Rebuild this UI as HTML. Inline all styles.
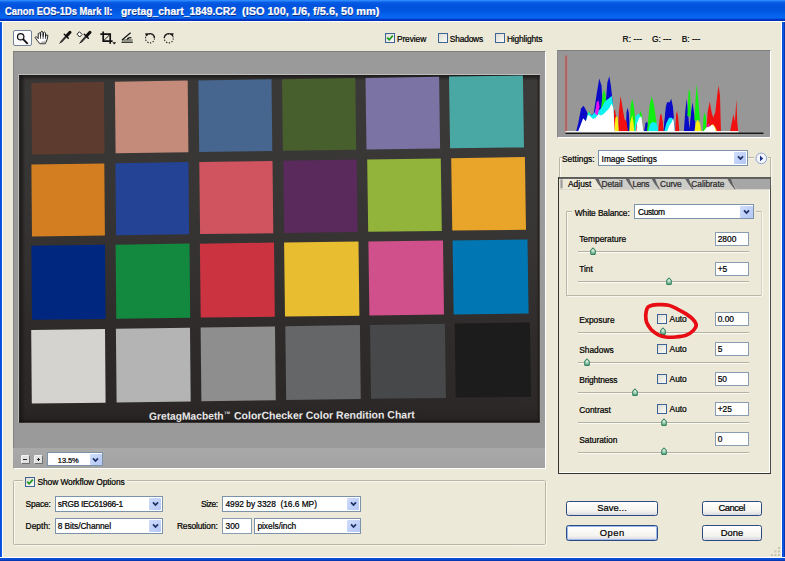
<!DOCTYPE html><html><head><meta charset="utf-8"><title>Camera Raw</title><style>
html,body{margin:0;padding:0;overflow:hidden;}
body{width:785px;height:561px;overflow:hidden;background:#ece9d8;font-family:"Liberation Sans",sans-serif;font-size:8.4px;color:#000;position:relative;}
.a{position:absolute;}
.t{position:absolute;white-space:nowrap;line-height:10px;height:10px;-webkit-text-stroke:0.22px currentColor;}
#title{left:0;top:0;width:785px;height:21px;background:linear-gradient(to bottom,#2e8cff 0%,#2a86fb 4%,#0a5ee6 10%,#0254de 22%,#0053dc 35%,#0258e2 55%,#0565f0 75%,#0566f2 86%,#0348d2 90%,#0030bc 94%,#0030b8 100%);border-bottom:1px solid #fff}
#title .t{left:4px;top:6.3px;color:#fff;font-weight:bold;font-size:10.2px;line-height:12px;height:12px;text-shadow:0.6px 0.6px 0.5px #0a2a80;}
.bl{background:#0a4fd6;}
.inp{position:absolute;background:#fff;border:1px solid #8a9cb2;box-sizing:border-box;}
.inp .t{left:1.4px;top:1.7px;}
.cmb{position:absolute;background:#fff;border:1px solid #7b92ab;box-sizing:border-box;}
.cmb .t{left:3px;top:2.2px;}
.cmb .dd{position:absolute;right:0.3px;top:0.5px;bottom:0.5px;width:12.2px;background:linear-gradient(135deg,#cfdcfb,#b3c7f6);border-radius:0.8px;box-sizing:border-box;}
.cmb .dd svg{position:absolute;left:2.6px;top:50%;margin-top:-2.8px;}
.cb{position:absolute;width:10px;height:10px;box-sizing:border-box;border:1px solid #3d6496;background:linear-gradient(135deg,#dedcd2,#fbfbf8);}
.btn{position:absolute;box-sizing:border-box;border:1px solid #2b4a80;border-radius:2.5px;background:linear-gradient(to bottom,#fff,#f4f3ee 70%,#d6d8e2);text-align:center;}
.btn .t{left:0;right:0;top:1.8px;font-size:9.4px;}
.gb{position:absolute;box-sizing:border-box;border:1px solid #b9b6a4;border-radius:1.5px;box-shadow:0.8px 0.8px 0 #fbfaf5,inset 0.8px 0.8px 0 #fbfaf5;}
.trk{position:absolute;height:1.2px;background:#b3b1a2;border-bottom:1px solid #fbfaf4;}
</style></head><body>
<svg width="0" height="0" style="position:absolute"><defs><linearGradient id="tg" x1="0" y1="0" x2="0" y2="1"><stop offset="0.2" stop-color="#f4fbf4"/><stop offset="1" stop-color="#5aa881"/></linearGradient></defs></svg>
<div id="title" class="a">
<div class="t" style="left:4.5px;transform-origin:0 0;transform:scaleX(0.9207)">Canon EOS-1Ds Mark II:</div>
<div class="t" style="left:120.5px;transform-origin:0 0;transform:scaleX(1.0150)">gretag_chart_1849.CR2</div>
<div class="t" style="left:242.3px;transform-origin:0 0;transform:scaleX(1.0731)">(ISO 100, 1/6, f/5.6, 50 mm)</div>
</div>
<div class="a bl" style="left:0;top:22px;width:1.6px;height:539px;background:linear-gradient(to right,#0838b4,#0a50e0 30%,#0f5ee8 70%,#0a52dc);border-right:0.9px solid #fff"></div>
<div class="a bl" style="left:781px;top:22px;width:3.2px;height:539px;background:linear-gradient(to right,#0a4ad0,#0b55e0 50%,#062a9a);border-left:0.9px solid #fff"></div>
<div class="a bl" style="left:0;top:557px;width:785px;height:3.2px;background:linear-gradient(to bottom,#0a4ad0,#0b50dc 40%,#0630a4);border-top:0.9px solid #fff"></div>
<div class="a" style="left:13px;top:30px;width:19px;height:16px;box-sizing:border-box;border:1px solid #74829a;border-radius:2px;background:#fcfcff"></div>
<svg class="a" style="left:0;top:22px" width="200" height="30" viewBox="0 22 200 30">
<g fill="none" stroke="#111" stroke-width="1.1">
<circle cx="20.700" cy="36.700" r="3.200" fill="#f0f0f0" stroke-width="1.250"/>
<path d="M23.100 39.200 L27.700 43.900" stroke-width="1.900"/>
</g>
<!-- hand -->
<path d="M39.800 43.700 L37.200 40.400 L35.200 37.600 L36.100 36.500 L38.200 38.600 L38.200 33.700 L39.200 32.800 L40.300 33.500 L40.500 36.300 L40.800 32 L41.800 31.300 L42.900 32 L43.100 36.300 L43.600 32.600 L44.600 32.100 L45.500 32.900 L45.500 36.800 L46.300 35 L47.300 34.900 L47.900 35.900 L47 39.800 L45.300 43.700 Z" fill="#fff" stroke="#151515" stroke-width="0.950" stroke-linejoin="round"/>
<path d="M40.500 36 V38.800 M43.100 36 V38.800 M45.500 36.600 V38.800" stroke="#222" stroke-width="0.800" fill="none"/>
<path d="M40.500 43.200 L44.800 43.200 L46 40.500 L42 41.500 Z" fill="#b8b8b8"/>
<!-- eyedropper -->
<g stroke="#111" stroke-linecap="round">
<path d="M59.8 43.2 L61.6 41.2" stroke-width="1"/>
<path d="M61.4 41.6 L65.6 37" stroke-width="2" stroke="#333"/>
<path d="M64.3 34.300 L68.300 38.300" stroke-width="1.5"/>
<path d="M66.8 35.8 L70 32.300" stroke-width="3.1"/>
</g>
<!-- color sampler -->
<g stroke="#111" stroke-linecap="round">
<path d="M79.8 43.2 L81.6 41.2" stroke-width="1"/>
<path d="M81.4 41.6 L85.6 37" stroke-width="2" stroke="#333"/>
<path d="M84.3 34.300 L88.300 38.300" stroke-width="1.5"/>
<path d="M86.8 35.8 L90 32.300" stroke-width="3.1"/>
<path d="M79.7 32 L82.1 34.500 L79.7 37 L77.3 34.500 Z" fill="#fff" stroke-width="1" stroke="#222"/>
</g>
<!-- crop -->
<g stroke="#111" stroke-width="1.7" fill="none">
<path d="M103.2 31.400 V41.200 H112.600"/>
<path d="M100.400 34.200 H110.200 V43.800"/>
<path d="M103.800 40.600 L110 34.400" stroke-width="1"/>
</g>
<path d="M112.400 42.200 H116.200 L114.300 44.600 Z" fill="#111"/>
<!-- straighten -->
<g stroke="#111" fill="none">
<path d="M121.5 42.2 H132.8" stroke-width="1.2"/>
<path d="M122 40 L130.600 32.800" stroke-width="1.2"/><path d="M122 40 H132.600" stroke-width="0.800"/>
<path d="M127.3 39.6 A2.8 2.8 0 0 1 131.4 38" stroke-width="1.4"/>
</g>
<!-- rotate ccw -->
<g stroke="#222" fill="none">
<circle cx="150" cy="38.4" r="4.5" stroke-width="1.1" stroke-dasharray="1.3 1.5"/>
<path d="M146.6 35 A4.6 4.6 0 0 1 154.5 38" stroke-width="1.3"/>
</g>
<path d="M145.2 33.2 L148.8 33.6 L146 36.6 Z" fill="#111"/>
<!-- rotate cw -->
<g stroke="#222" fill="none">
<circle cx="168.8" cy="38.4" r="4.5" stroke-width="1.1" stroke-dasharray="1.3 1.5"/>
<path d="M172.2 35 A4.6 4.6 0 0 0 164.3 38" stroke-width="1.3"/>
</g>
<path d="M173.6 33.2 L170 33.6 L172.8 36.6 Z" fill="#111"/>
</svg>
<div class="cb" style="left:385px;top:32.8px"><svg class="a" style="left:0;top:0" width="8" height="8" viewBox="0 0 8 8"><path d="M1.2 3.6 L3.2 5.8 L6.8 1.6" fill="none" stroke="#1f9a1f" stroke-width="1.7"/></svg></div>
<div class="t" style="left:396.9px;top:33.5px;;letter-spacing:-0.082px">Preview</div>
<div class="cb" style="left:438px;top:32.8px"></div>
<div class="t" style="left:449.8px;top:33.5px;;letter-spacing:-0.180px">Shadows</div>
<div class="cb" style="left:495px;top:32.8px"></div>
<div class="t" style="left:506.9px;top:33.5px;;letter-spacing:-0.139px">Highlights</div>
<div class="t" style="left:622.6px;top:33.6px;;letter-spacing:0.079px">R: ---</div>
<div class="t" style="left:652px;top:33.6px;;letter-spacing:-0.049px">G: ---</div>
<div class="t" style="left:681.8px;top:33.6px;;letter-spacing:-0.011px">B: ---</div>
<div class="a" style="left:12.9px;top:50.5px;width:533.1px;height:418.7px;box-sizing:border-box;border:1px solid #fff;border-top-color:#7e7e7e;border-left-color:#858585;background:#999a99"></div>
<div class="a" style="left:13px;top:448px;width:532px;height:20px;background:linear-gradient(to bottom,#a9a9a9,#a2a2a2)"></div>
<svg class="a" style="left:18px;top:74px" width="522.4" height="349" viewBox="18 74 522.4 349"><defs><linearGradient id="cg" x1="0" y1="0" x2="1" y2="0"><stop offset="0" stop-color="#1c1a19"/><stop offset="0.005" stop-color="#242221"/><stop offset="0.012" stop-color="#393736"/><stop offset="0.994" stop-color="#3c3a39"/><stop offset="1" stop-color="#1c1815"/></linearGradient><linearGradient id="cv" x1="0" y1="0" x2="0" y2="1"><stop offset="0" stop-color="#181513" stop-opacity="0.9"/><stop offset="0.008" stop-color="#1c1a19" stop-opacity="0.5"/><stop offset="0.016" stop-color="#1c1817" stop-opacity="0"/><stop offset="0.3" stop-color="#1c1817" stop-opacity="0.05"/><stop offset="0.55" stop-color="#1c1817" stop-opacity="0.2"/><stop offset="0.75" stop-color="#1c1817" stop-opacity="0.42"/><stop offset="0.95" stop-color="#1c1817" stop-opacity="0.5"/><stop offset="0.99" stop-color="#1a1615" stop-opacity="0.62"/><stop offset="1" stop-color="#120e0d" stop-opacity="0.95"/></linearGradient></defs><rect x="18.2" y="74.1" width="521.6" height="348.6" fill="#c2c2c2"/><rect x="19.1" y="75" width="520.6" height="347.6" fill="url(#cg)"/><rect x="19.1" y="75" width="520.6" height="347.6" fill="url(#cv)"/><polygon points="31.4,83.0 103.9,81.9 104.5,153.5 32.0,154.4" fill="#5d3c2f"/><polygon points="114.9,81.7 187.7,80.6 188.4,152.3 115.6,153.2" fill="#c48b7a"/><polygon points="198.4,80.4 271.5,79.3 272.3,151.1 199.2,152.0" fill="#46668f"/><polygon points="282.0,79.2 355.3,78.1 356.2,149.8 282.9,150.7" fill="#475e2d"/><polygon points="365.5,77.9 439.1,76.8 440.1,148.6 366.5,149.5" fill="#7b73a3"/><polygon points="449.0,76.6 522.9,75.5 524.0,147.4 450.1,148.3" fill="#4aa8a4"/><polygon points="31.4,164.5 104.3,163.4 104.9,235.5 32.0,236.4" fill="#d37f21"/><polygon points="115.4,163.2 188.4,162.1 189.1,234.3 116.1,235.2" fill="#254394"/><polygon points="199.3,162.0 272.5,160.9 273.3,233.2 200.1,234.1" fill="#d0545f"/><polygon points="283.3,160.7 356.7,159.6 357.6,232.0 284.2,232.9" fill="#5a2a5c"/><polygon points="367.2,159.5 440.8,158.4 441.8,230.9 368.2,231.8" fill="#93b43b"/><polygon points="451.2,158.2 524.9,157.1 526.0,229.7 452.3,230.6" fill="#e9a529"/><polygon points="31.4,245.8 105.0,244.7 105.6,318.9 32.0,319.8" fill="#00277f"/><polygon points="115.6,244.7 189.5,243.6 190.2,317.8 116.3,318.7" fill="#12893f"/><polygon points="199.9,243.7 274.0,242.6 274.8,316.7 200.7,317.6" fill="#cc3341"/><polygon points="284.1,242.6 358.5,241.5 359.4,315.7 285.0,316.6" fill="#e9bd30"/><polygon points="368.4,241.6 443.0,240.5 444.0,314.6 369.4,315.5" fill="#d0508b"/><polygon points="452.6,240.5 527.5,239.4 528.6,313.5 453.7,314.4" fill="#0077b3"/><polygon points="31.2,330.1 105.0,329.0 105.6,402.7 31.8,403.6" fill="#d4d3cf"/><polygon points="115.9,328.8 190.0,327.7 190.7,401.5 116.6,402.4" fill="#b4b4b4"/><polygon points="200.6,327.5 275.0,326.4 275.8,400.3 201.4,401.2" fill="#8e8e8e"/><polygon points="285.3,326.2 359.9,325.1 360.8,399.1 286.2,400.0" fill="#656667"/><polygon points="370.0,324.9 444.9,323.8 445.9,397.9 371.0,398.8" fill="#46484a"/><polygon points="454.7,323.6 529.9,322.5 531.0,396.7 455.8,397.6" fill="#1c1c1c"/><g transform="rotate(-0.34 149 420)" font-family="Liberation Sans,sans-serif" font-weight="bold" fill="#e6e6e6"><text x="149" y="419.9" font-size="10.6" textLength="74.6" lengthAdjust="spacingAndGlyphs">GretagMacbeth</text><text x="224.4" y="414.6" font-size="3.8">TM</text><text x="234" y="419.9" font-size="10.6" textLength="180.8" lengthAdjust="spacingAndGlyphs">ColorChecker Color Rendition Chart</text></g></svg>
<div class="a" style="left:20.6px;top:455.2px;width:9px;height:8.4px;box-sizing:border-box;border:1px solid #f4f4f4;border-right-color:#6e6e6e;border-bottom-color:#6e6e6e;border-radius:1.5px;background:#e2e2e2"><div class="a" style="left:1.5px;top:2.4px;width:4px;height:1.6px;background:#222"></div></div>
<div class="a" style="left:34px;top:455.2px;width:9px;height:8.4px;box-sizing:border-box;border:1px solid #f4f4f4;border-right-color:#6e6e6e;border-bottom-color:#6e6e6e;border-radius:1.5px;background:#e2e2e2"><div class="a" style="left:1.8px;top:2.5px;width:3.6px;height:1.4px;background:#222"></div><div class="a" style="left:2.9px;top:1.4px;width:1.4px;height:3.6px;background:#222"></div></div>
<div class="cmb" style="left:46.5px;top:452.4px;width:56.5px;height:13.9px"><div class="t" style="left:10.3px;letter-spacing:-0.093px;font-size:7.5px">13.5%</div><div class="dd"><svg width="7" height="6" viewBox="0 0 7 6"><path d="M1 1.3 L3.5 4 L6 1.3" fill="none" stroke="#1e2f66" stroke-width="1.7"/></svg></div></div>
<div class="gb" style="left:13px;top:480.3px;width:533px;height:65.2px"></div>
<div class="a" style="left:23px;top:476px;width:104px;height:12px;background:#ece9d8"></div>
<div class="cb" style="left:25.4px;top:477.2px"><svg class="a" style="left:0;top:0" width="8" height="8" viewBox="0 0 8 8"><path d="M1.2 3.6 L3.2 5.8 L6.8 1.6" fill="none" stroke="#1f9a1f" stroke-width="1.7"/></svg></div>
<div class="t" style="left:37.5px;top:477.4px;;letter-spacing:-0.077px">Show Workflow Options</div>
<div class="t" style="left:25.6px;top:499.3px;;letter-spacing:-0.175px">Space:</div>
<div class="cmb" style="left:55px;top:496px;width:107.6px;height:15.8px"><div class="t" style="left:1.8px;letter-spacing:-0.291px">sRGB IEC61966-1</div><div class="dd"><svg width="7" height="6" viewBox="0 0 7 6"><path d="M1 1.3 L3.5 4 L6 1.3" fill="none" stroke="#1e2f66" stroke-width="1.7"/></svg></div></div>
<div class="t" style="left:25.6px;top:521.2px;;letter-spacing:0.025px">Depth:</div>
<div class="cmb" style="left:55px;top:518.2px;width:107.6px;height:15.6px"><div class="t" style="left:1.8px;letter-spacing:-0.095px">8 Bits/Channel</div><div class="dd"><svg width="7" height="6" viewBox="0 0 7 6"><path d="M1 1.3 L3.5 4 L6 1.3" fill="none" stroke="#1e2f66" stroke-width="1.7"/></svg></div></div>
<div class="t" style="left:201.1px;top:499.3px;;letter-spacing:-0.395px">Size:</div>
<div class="cmb" style="left:221.6px;top:496px;width:139.2px;height:15.8px"><div class="t" style="left:2.9px;letter-spacing:-0.033px">4992 by 3328&nbsp; (16.6 MP)</div><div class="dd"><svg width="7" height="6" viewBox="0 0 7 6"><path d="M1 1.3 L3.5 4 L6 1.3" fill="none" stroke="#1e2f66" stroke-width="1.7"/></svg></div></div>
<div class="t" style="left:176.9px;top:521.2px;;letter-spacing:-0.102px">Resolution:</div>
<div class="inp" style="left:221.6px;top:518.2px;width:30.8px;height:15.6px"><div class="t" style="left:2.9px;top:2.2px">300</div></div>
<div class="cmb" style="left:254px;top:518.2px;width:106.8px;height:15.6px"><div class="t" style="left:2.4px;letter-spacing:-0.029px">pixels/inch</div><div class="dd"><svg width="7" height="6" viewBox="0 0 7 6"><path d="M1 1.3 L3.5 4 L6 1.3" fill="none" stroke="#1e2f66" stroke-width="1.7"/></svg></div></div>
<div class="a" style="left:557px;top:50px;width:214px;height:88px;box-sizing:border-box;background:#969796;border:1px solid #fff;border-top-color:#7e7e7e;border-left-color:#8a8a8a"></div>
<svg class="a" style="left:558px;top:51px" width="212" height="86" viewBox="558 51 212 86"><rect x="564.4" y="55.6" width="3.4" height="76" fill="#b98686"/><rect x="565.2" y="55.6" width="1.8" height="76" fill="#a96565"/><g transform="translate(560,70) scale(0.140135)"><polygon points="115,440 130,380 150,275 168,255 188,290 205,330 240,310 262,170 280,60 296,110 305,250 325,250 338,90 352,45 363,110 375,220 385,440" fill="#0a0ac8"/><polygon points="470,440 475,300 482,270 490,300 500,440" fill="#0a0ac8"/><polygon points="600,440 610,380 622,370 632,400 640,440" fill="#0a0ac8"/><polygon points="740,440 750,330 765,230 785,230 785,440" fill="#0a0ac8"/><polygon points="290,300 305,170 315,140 325,180 335,300" fill="#10f010"/><polygon points="190,340 205,290 225,330" fill="#10f010"/><polygon points="495,440 505,250 515,205 525,250 535,330 540,440" fill="#10f010"/><polygon points="560,340 575,290 590,340" fill="#10f010"/><polygon points="620,440 640,250 655,185 670,250 690,380 700,440" fill="#10f010"/><polygon points="185,440 190,340 205,300 225,325 250,300 262,250 275,290 300,265 320,225 345,205 370,185 380,260 385,440" fill="#10f0f0"/><polygon points="250,310 262,230 275,215 282,260 268,325" fill="#f010f0"/><polygon points="630,440 640,390 660,370 690,380 705,440" fill="#10f0f0"/><polygon points="530,440 540,330 560,310 580,340 590,440" fill="#10f0f0"/><polygon points="745,440 760,380 785,330 785,440" fill="#10f0f0"/><polygon points="385,290 392,280 400,330 415,440 385,440" fill="#f01010"/><polygon points="415,440 420,300 432,185 445,260 460,350 475,370 485,440" fill="#f01010"/><polygon points="540,440 548,380 555,400 560,440" fill="#f01010"/><polygon points="700,440 712,340 722,315 732,360 740,440" fill="#f01010"/><polygon points="388,440 395,340 410,330 420,440" fill="#f8f010"/><polygon points="495,440 500,380 515,320 525,380 530,440" fill="#f8f010"/><polygon points="128,440 150,385 165,345 185,365 200,320 215,330 235,350 255,340 275,315 290,325 310,315 330,295 350,275 368,240 380,270 385,345 390,440" fill="#fff"/><polygon points="545,440 550,380 565,340 580,330 590,400 595,440" fill="#fff"/></g><g transform="translate(660,70) scale(0.140135)"><polygon points="0,440 0,320 8,315 18,380 25,440" fill="#f01010"/><polygon points="25,440 35,330 45,230 55,300 65,240 80,205 92,260 100,350 105,440" fill="#0a0ac8"/><polygon points="30,440 45,380 65,340 85,340 100,370 105,440" fill="#10f0f0"/><polygon points="50,440 65,400 85,370 95,340 100,380 105,440" fill="#fff"/><polygon points="108,440 115,320 122,290 130,340 138,440" fill="#f01010"/><polygon points="170,440 180,300 190,205 200,300 210,420 222,300 232,230 242,300 250,360 255,440" fill="#0a0ac8"/><polygon points="195,330 205,135 215,160 220,330" fill="#10f010"/><polygon points="245,360 255,200 262,100 272,200 285,360" fill="#10f010"/><polygon points="245,440 255,380 268,355 285,380 295,440" fill="#f8f010"/><polygon points="305,440 310,340 320,300 328,340 332,440" fill="#10f010"/><polygon points="330,440 340,300 355,225 368,300 380,340 395,300 408,180 418,110 428,180 435,440" fill="#f01010"/><polygon points="335,410 345,380 355,400" fill="#f010f0"/><polygon points="355,440 365,400 378,385 395,410 408,440" fill="#f8f010"/><polygon points="310,440 330,410 350,405 370,390 385,400 400,440" fill="#fff"/><polygon points="500,440 515,360 525,315 535,370 545,210 552,380 558,440" fill="#f01010"/></g><rect x="565.5" y="131.1" width="173" height="1.5" fill="#fff"/><rect x="565.5" y="132.6" width="198" height="1.3" fill="#080808"/></svg>
<div class="gb" style="left:558.5px;top:157.3px;width:212.5px;height:28px;border-bottom:none"></div>
<div class="a" style="left:561.5px;top:150px;width:36px;height:16px;background:#ece9d8"></div><div class="a" style="left:753.6px;top:150px;width:14.6px;height:16px;background:#ece9d8"></div>
<div class="t" style="left:562px;top:154px;">Settings:</div>
<div class="cmb" style="left:598.3px;top:150.4px;width:149.4px;height:15.6px"><div class="t" style="left:2.3px;letter-spacing:-0.045px">Image Settings</div><div class="dd"><svg width="7" height="6" viewBox="0 0 7 6"><path d="M1 1.3 L3.5 4 L6 1.3" fill="none" stroke="#1e2f66" stroke-width="1.7"/></svg></div></div>
<svg class="a" style="left:754px;top:151px" width="15" height="15" viewBox="0 0 15 15"><circle cx="7.3" cy="7.4" r="5.3" fill="#f4f6fd" stroke="#8fa3cf" stroke-width="1"/><path d="M6 4.6 L9.2 7.4 L6 10.2 Z" fill="#1a2f8a"/></svg>
<div class="a" style="left:558.3px;top:176.6px;width:212.7px;height:297.7px;box-sizing:border-box;border:1.1px solid #34342f;border-right:1.9px solid #4a4a46;background:#ece9d8;box-shadow:inset -1px -1px 0 #fff"></div>
<svg class="a" style="left:559px;top:177px" width="212" height="13" viewBox="559 177 212 13"><rect x="559" y="177" width="211.2" height="12.3" fill="#a6a6a6"/><path d="M597 189.3 L597 179 H729 L737 189.3 Z" fill="#cdccc7"/><path d="M559 189.3 V179 H595.5 L601.5 189.3 Z" fill="#ece9d8"/><rect x="559" y="177" width="211.2" height="1.9" fill="#5c5c5a"/><rect x="560.4" y="179.4" width="2.2" height="9" fill="#9c9c9a"/><path d="M595 178.8 H598.6 Q600 184 603.4 189.3 H602.4 Q598.2 185 595 178.8 Z" fill="#626264"/><path d="M625.6 178.8 H629.2 Q630.6 184 634 189.3 H633 Q628.8 185 625.6 178.8 Z" fill="#626264"/><path d="M651.6 178.8 H655.2 Q656.6 184 660 189.3 H659 Q654.8 185 651.6 178.8 Z" fill="#626264"/><path d="M685.2 178.8 H688.8 Q690.2 184 693.6 189.3 H692.6 Q688.4 185 685.2 178.8 Z" fill="#626264"/><path d="M727.3 178.8 H730.9 Q732.3 184 735.7 189.3 H734.7 Q730.5 185 727.3 178.8 Z" fill="#626264"/></svg>
<div class="t" style="left:568px;top:179px;;letter-spacing:0.009px">Adjust</div>
<div class="t" style="left:601.6px;top:179px;color:#2a2a2a;letter-spacing:-0.096px">Detail</div>
<div class="t" style="left:632.5px;top:179px;color:#2a2a2a;letter-spacing:-0.379px">Lens</div>
<div class="t" style="left:660px;top:179px;color:#2a2a2a;letter-spacing:-0.162px">Curve</div>
<div class="t" style="left:691.3px;top:179px;color:#2a2a2a;letter-spacing:-0.058px">Calibrate</div>
<div class="gb" style="left:565.6px;top:211.3px;width:196.6px;height:84.8px;border-right-color:#d6d3c2"></div>
<div class="a" style="left:572px;top:204px;width:184px;height:16px;background:#ece9d8"></div>
<div class="t" style="left:574.8px;top:207.5px;;letter-spacing:-0.107px">White Balance:</div>
<div class="cmb" style="left:633.8px;top:204.2px;width:120px;height:15.3px"><div class="t" style="left:3.2px;letter-spacing:-0.390px">Custom</div><div class="dd"><svg width="7" height="6" viewBox="0 0 7 6"><path d="M1 1.3 L3.5 4 L6 1.3" fill="none" stroke="#1e2f66" stroke-width="1.7"/></svg></div></div>
<div class="t" style="left:579.2px;top:234.4px;">Temperature</div>
<div class="inp" style="left:715.3px;top:231.6px;width:33.8px;height:14.4px"><div class="t" style="left:1.4px;top:1.2px">2800</div></div>
<div class="trk" style="left:578px;top:251.3px;width:171px"></div>
<svg class="a" style="left:589px;top:247.1px" width="8" height="9" viewBox="0 0 8 9"><path d="M4 1 L6.300 3.500 V6.400 Q6.300 7.400 5.300 7.400 H2.700 Q1.700 7.400 1.700 6.400 V3.500 Z" fill="url(#tg)" stroke="#35845f" stroke-width="1.1"/></svg>
<div class="t" style="left:579.2px;top:264.4px;">Tint</div>
<div class="inp" style="left:715.3px;top:261.6px;width:33.8px;height:14.4px"><div class="t" style="left:1.4px;top:1.2px">+5</div></div>
<div class="trk" style="left:578px;top:281.3px;width:171px"></div>
<svg class="a" style="left:665px;top:277.1px" width="8" height="9" viewBox="0 0 8 9"><path d="M4 1 L6.300 3.500 V6.400 Q6.300 7.400 5.300 7.400 H2.700 Q1.700 7.400 1.700 6.400 V3.500 Z" fill="url(#tg)" stroke="#35845f" stroke-width="1.1"/></svg>
<div class="t" style="left:579.2px;top:314.6px;">Exposure</div>
<div class="inp" style="left:715.3px;top:311.8px;width:33.8px;height:14.4px"><div class="t" style="left:1.4px;top:1.2px">0.00</div></div>
<div class="trk" style="left:578px;top:331.5px;width:171px"></div>
<svg class="a" style="left:658.9px;top:327.3px" width="8" height="9" viewBox="0 0 8 9"><path d="M4 1 L6.300 3.500 V6.400 Q6.300 7.400 5.300 7.400 H2.700 Q1.700 7.400 1.700 6.400 V3.500 Z" fill="url(#tg)" stroke="#35845f" stroke-width="1.1"/></svg>
<div class="cb" style="left:656.9px;top:313.8px"></div>
<div class="t" style="left:669.6px;top:314.1px;;letter-spacing:-0.045px">Auto</div>
<div class="t" style="left:579.2px;top:344.8px;">Shadows</div>
<div class="inp" style="left:715.3px;top:342px;width:33.8px;height:14.4px"><div class="t" style="left:1.4px;top:1.2px">5</div></div>
<div class="trk" style="left:578px;top:361.7px;width:171px"></div>
<svg class="a" style="left:583.2px;top:357.5px" width="8" height="9" viewBox="0 0 8 9"><path d="M4 1 L6.300 3.500 V6.400 Q6.300 7.400 5.300 7.400 H2.700 Q1.700 7.400 1.700 6.400 V3.500 Z" fill="url(#tg)" stroke="#35845f" stroke-width="1.1"/></svg>
<div class="cb" style="left:656.9px;top:344px"></div>
<div class="t" style="left:669.6px;top:344.3px;;letter-spacing:-0.045px">Auto</div>
<div class="t" style="left:579.2px;top:374.8px;;letter-spacing:-0.139px">Brightness</div>
<div class="inp" style="left:715.3px;top:372px;width:33.8px;height:14.4px"><div class="t" style="left:1.4px;top:1.2px">50</div></div>
<div class="trk" style="left:578px;top:391.7px;width:171px"></div>
<svg class="a" style="left:631.4px;top:387.5px" width="8" height="9" viewBox="0 0 8 9"><path d="M4 1 L6.300 3.500 V6.400 Q6.300 7.400 5.300 7.400 H2.700 Q1.700 7.400 1.700 6.400 V3.500 Z" fill="url(#tg)" stroke="#35845f" stroke-width="1.1"/></svg>
<div class="cb" style="left:656.9px;top:374px"></div>
<div class="t" style="left:669.6px;top:374.3px;;letter-spacing:-0.045px">Auto</div>
<div class="t" style="left:579.2px;top:404.8px;">Contrast</div>
<div class="inp" style="left:715.3px;top:402px;width:33.8px;height:14.4px"><div class="t" style="left:1.4px;top:1.2px">+25</div></div>
<div class="trk" style="left:578px;top:421.7px;width:171px"></div>
<svg class="a" style="left:659.7px;top:417.5px" width="8" height="9" viewBox="0 0 8 9"><path d="M4 1 L6.300 3.500 V6.400 Q6.300 7.400 5.300 7.400 H2.700 Q1.700 7.400 1.700 6.400 V3.500 Z" fill="url(#tg)" stroke="#35845f" stroke-width="1.1"/></svg>
<div class="cb" style="left:656.9px;top:404px"></div>
<div class="t" style="left:669.6px;top:404.3px;;letter-spacing:-0.045px">Auto</div>
<div class="t" style="left:579.2px;top:434.7px;">Saturation</div>
<div class="inp" style="left:715.3px;top:431.9px;width:33.8px;height:14.4px"><div class="t" style="left:1.4px;top:1.2px">0</div></div>
<div class="trk" style="left:578px;top:451.6px;width:171px"></div>
<svg class="a" style="left:659.7px;top:447.4px" width="8" height="9" viewBox="0 0 8 9"><path d="M4 1 L6.300 3.500 V6.400 Q6.300 7.400 5.300 7.400 H2.700 Q1.700 7.400 1.700 6.400 V3.500 Z" fill="url(#tg)" stroke="#35845f" stroke-width="1.1"/></svg>
<svg class="a" style="left:638px;top:298px" width="66" height="46" viewBox="638 298 66 46"><path d="M649.3 306.2 C651.0 305.5 654.2 304.9 657.4 304.7 C660.7 304.5 665.2 304.4 668.6 305.2 C672.0 306.0 674.9 307.8 677.8 309.3 C680.7 310.7 683.4 312.2 686.0 313.9 C688.5 315.6 691.4 317.6 693.1 319.5 C694.8 321.3 696.2 323.2 696.2 325.1 C696.2 326.9 694.8 329.0 693.1 330.7 C691.4 332.4 688.9 334.2 686.0 335.3 C683.1 336.3 679.2 336.7 675.8 337.0 C672.4 337.3 668.5 337.4 665.6 337.0 C662.7 336.6 660.8 336.0 658.4 334.8 C656.1 333.5 653.3 331.7 651.3 329.7 C649.4 327.6 647.7 324.9 646.7 322.5 C645.8 320.1 645.7 317.7 645.7 315.4 C645.8 313.1 646.4 310.3 647.0 308.8 C647.6 307.2 647.5 306.9 649.3 306.2 Z" fill="none" stroke="#e80c14" stroke-width="3.7" stroke-linejoin="round"/></svg>
<div class="btn" style="left:566px;top:500.5px;width:92px;height:15.5px;"><div class="t" style="letter-spacing:0.057px;text-indent:0.057px">Save...</div></div>
<div class="btn" style="left:566px;top:525px;width:92px;height:15.5px;box-shadow:inset 0 0 0 1px #9fb9ea;"><div class="t" style="letter-spacing:0.502px;text-indent:0.502px">Open</div></div>
<div class="btn" style="left:702px;top:500.5px;width:60px;height:15.5px;"><div class="t" style="letter-spacing:-0.452px;text-indent:-0.452px">Cancel</div></div>
<div class="btn" style="left:702px;top:525px;width:60px;height:15.5px;"><div class="t" style="letter-spacing:0.009px;text-indent:0.009px">Done</div></div>
<svg class="a" style="left:770px;top:546px" width="12" height="12" viewBox="0 0 12 12"><g fill="#c8c4b2"><rect x="8" y="8" width="2" height="2"/><rect x="8" y="4.500" width="2" height="2"/><rect x="8" y="1" width="2" height="2"/><rect x="4.500" y="8" width="2" height="2"/><rect x="4.500" y="4.500" width="2" height="2"/><rect x="1" y="8" width="2" height="2"/></g></svg>
</body></html>
